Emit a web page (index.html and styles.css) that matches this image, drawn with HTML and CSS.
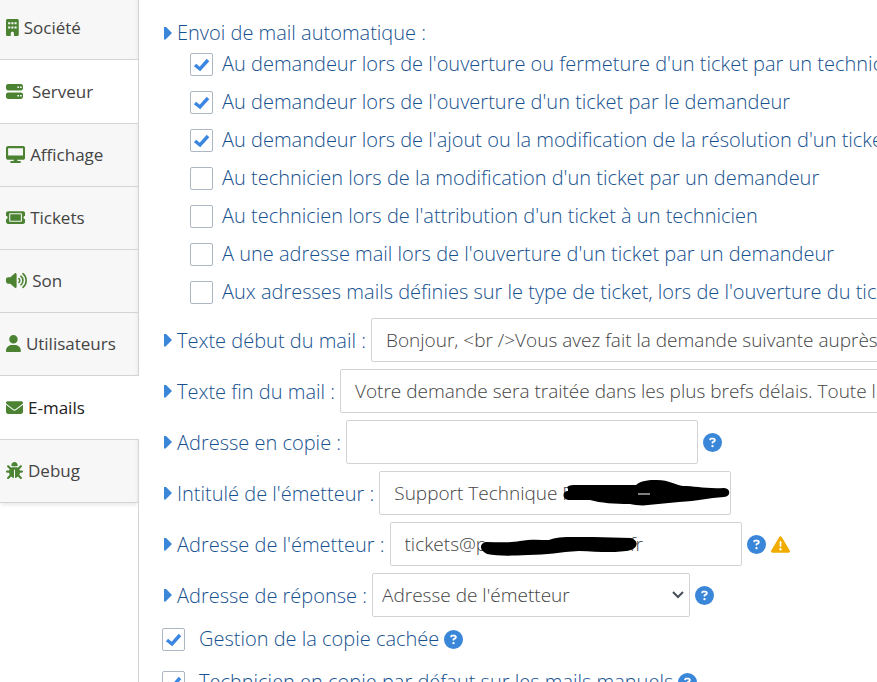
FILE: index.html
```html
<!DOCTYPE html>
<html lang="fr">

<head>
    <meta charset="utf-8">
    <meta name="viewport" content="width=device-width,initial-scale=1.0">
    <title>Paramètres - E-mails</title>
    <link rel="stylesheet" href="styles.css">
</head>

<body>
    <svg class="sprite" aria-hidden="true">
        <symbol id="help" viewBox="0 0 512 512">
            <path d="M256 512A256 256 0 1 0 256 0a256 256 0 1 0 0 512zM169.800 165.300c7.900-22.300 29.100-37.300 52.800-37.300h58.300c34.900 0 63.100 28.300 63.100 63.100c0 22.600-12.100 43.500-31.700 54.800L280 264.400c-.2 13-10.900 23.600-24 23.600c-13.300 0-24-10.700-24-24V250.500c0-8.600 4.600-16.500 12.100-20.800l44.300-25.400c4.700-2.700 7.600-7.700 7.600-13.100c0-8.400-6.800-15.100-15.100-15.100H222.600c-3.400 0-6.400 2.100-7.500 5.300l-.4 1.200c-4.400 12.500-18.200 19-30.600 14.600s-19-18.200-14.600-30.600l.4-1.200zM224 352a32 32 0 1 1 64 0 32 32 0 1 1 -64 0z"/>
        </symbol>
    </svg>

    <div id="wrap">
        <nav class="tabs">
            <a href="#societe" class="tab">
                <svg viewBox="0 0 384 512"><path fill-rule="evenodd" d="M48 0C21.500 0 0 21.500 0 48V464c0 26.500 21.500 48 48 48h96V432c0-26.500 21.500-48 48-48s48 21.500 48 48v80h96c26.500 0 48-21.500 48-48V48c0-26.500-21.500-48-48-48H48zM64 96h64v64H64zM160 96h64v64h-64zM256 96h64v64h-64zM64 224h64v64H64zM160 224h64v64h-64zM256 224h64v64h-64z"/></svg>
                <span>Société</span>
            </a>
            <a href="#serveur" class="tab tab-hover">
                <svg viewBox="0 0 512 512"><path fill-rule="evenodd" d="M64 32C28.700 32 0 60.700 0 96v64c0 35.300 28.700 64 64 64H448c35.300 0 64-28.700 64-64V96c0-35.300-28.700-64-64-64H64zM344 104h48v48h-48zM424 104h48v48h-48zM64 288c-35.300 0-64 28.700-64 64v64c0 35.300 28.700 64 64 64H448c35.300 0 64-28.700 64-64V352c0-35.300-28.700-64-64-64H64zM344 360h48v48h-48zM424 360h48v48h-48z"/></svg>
                <span>Serveur</span>
            </a>
            <a href="#affichage" class="tab">
                <svg viewBox="0 0 576 512"><path d="M64 0C28.700 0 0 28.700 0 64V352c0 35.300 28.700 64 64 64H240l-10.700 32H160c-17.700 0-32 14.300-32 32s14.300 32 32 32H416c17.700 0 32-14.300 32-32s-14.300-32-32-32H346.700L336 416H512c35.300 0 64-28.700 64-64V64c0-35.300-28.700-64-64-64H64zM512 64V288H64V64H512z"/></svg>
                <span>Affichage</span>
            </a>
            <a href="#tickets" class="tab">
                <svg viewBox="0 0 576 512"><path fill-rule="evenodd" d="M64 64C28.700 64 0 92.700 0 128v64c0 8.800 7.400 15.700 15.700 18.600C34.500 217.100 48 235 48 256s-13.500 38.900-32.300 45.400C7.400 304.300 0 311.200 0 320v64c0 35.300 28.700 64 64 64H512c35.300 0 64-28.700 64-64V320c0-8.800-7.400-15.700-15.700-18.600C541.500 294.900 528 277 528 256s13.500-38.900 32.300-45.400c8.300-2.900 15.700-9.800 15.700-18.600V128c0-35.300-28.700-64-64-64H64zM96 160c0-17.700 14.300-32 32-32H448c17.700 0 32 14.300 32 32V352c0 17.700-14.300 32-32 32H128c-17.700 0-32-14.300-32-32V160z"/><rect x="128" y="160" width="320" height="192" rx="16"/></svg>
                <span>Tickets</span>
            </a>
            <a href="#son" class="tab">
                <svg viewBox="0 0 640 512"><path d="M301 34.800C312.600 40 320 51.400 320 64V448c0 12.600-7.400 24-18.900 29.200s-25 3.100-34.400-5.300L131.800 352H64c-35.300 0-64-28.700-64-64V224c0-35.300 28.700-64 64-64h67.800L266.700 40.100c9.400-8.400 22.900-10.400 34.400-5.300z"/><g fill="none" stroke="currentColor" stroke-width="48" stroke-linecap="round"><path d="M388 200a72 72 0 0 1 0 112"/><path d="M449 126a168 168 0 0 1 0 260"/><path d="M510 51a264 264 0 0 1 0 410"/></g></svg>
                <span>Son</span>
            </a>
            <a href="#utilisateurs" class="tab">
                <svg viewBox="0 0 448 512"><path d="M224 256A128 128 0 1 0 224 0a128 128 0 1 0 0 256zm-45.700 48C79.800 304 0 383.800 0 482.300C0 498.700 13.300 512 29.700 512H418.300c16.400 0 29.700-13.300 29.700-29.700C448 383.800 368.200 304 269.700 304H178.300z"/></svg>
                <span>Utilisateurs</span>
            </a>
            <a href="#emails" class="tab tab-active">
                <svg viewBox="0 0 512 512"><path d="M48 64C21.500 64 0 85.500 0 112c0 15.100 7.100 29.300 19.200 38.400L236.800 313.600c11.400 8.500 27 8.500 38.400 0L492.800 150.400c12.100-9.100 19.200-23.300 19.200-38.400c0-26.500-21.500-48-48-48H48zM0 176V384c0 35.300 28.700 64 64 64H448c35.300 0 64-28.700 64-64V176L294.400 339.200c-22.800 17.100-54 17.100-76.800 0L0 176z"/></svg>
                <span>E-mails</span>
            </a>
            <a href="#debug" class="tab">
                <svg viewBox="0 0 512 512"><path d="M256 0c53 0 96 43 96 96v3.600c0 15.700-12.700 28.400-28.400 28.400H188.400c-15.700 0-28.400-12.700-28.400-28.400V96c0-53 43-96 96-96zM41.400 105.400c12.500-12.500 32.800-12.500 45.300 0l64 64c.7 .7 1.300 1.400 1.900 2.100c14.200-7.300 30.400-11.400 47.500-11.400H312c17.100 0 33.200 4.100 47.500 11.400c.6-.7 1.200-1.400 1.900-2.100l64-64c12.500-12.500 32.800-12.500 45.300 0s12.500 32.800 0 45.300l-64 64c-.7 .7-1.400 1.300-2.100 1.900c6.200 12 10.100 25.300 11.100 39.500H480c17.700 0 32 14.300 32 32s-14.300 32-32 32H416c0 24.600-5.500 47.800-15.400 68.600c2.200 1.300 4.200 2.900 6 4.800l64 64c12.500 12.500 12.500 32.800 0 45.300s-32.800 12.500-45.300 0l-63.100-63.100c-24.500 21.800-55.800 36.200-90.300 39.600V240c0-8.800-7.200-16-16-16s-16 7.200-16 16V479.200c-34.500-3.400-65.800-17.800-90.300-39.600L86.600 502.600c-12.500 12.500-32.800 12.500-45.300 0s-12.500-32.800 0-45.300l64-64c1.900-1.900 3.900-3.400 6-4.800C101.500 367.800 96 344.600 96 320H32c-17.700 0-32-14.300-32-32s14.300-32 32-32H96.300c1.100-14.100 5-27.500 11.100-39.500c-.7-.6-1.400-1.200-2.100-1.900l-64-64c-12.500-12.500-12.500-32.800 0-45.300z"/></svg>
                <span>Debug</span>
            </a>
        </nav>

        <form class="content">
            <div class="title caret">Envoi de mail automatique :</div>
            <div class="checks">
                <label class="check"><input type="checkbox" checked><span>Au demandeur lors de l'ouverture ou fermeture d'un ticket par un technicien</span></label>
                <label class="check"><input type="checkbox" checked><span>Au demandeur lors de l'ouverture d'un ticket par le demandeur</span></label>
                <label class="check"><input type="checkbox" checked><span>Au demandeur lors de l'ajout ou la modification de la résolution d'un ticket</span></label>
                <label class="check"><input type="checkbox"><span>Au technicien lors de la modification d'un ticket par un demandeur</span></label>
                <label class="check"><input type="checkbox"><span>Au technicien lors de l'attribution d'un ticket à un technicien</span></label>
                <label class="check"><input type="checkbox"><span>A une adresse mail lors de l'ouverture d'un ticket par un demandeur</span></label>
                <label class="check"><input type="checkbox"><span>Aux adresses mails définies sur le type de ticket, lors de l'ouverture du ticket</span></label>
            </div>

            <div class="fields">
                <div class="row">
                    <label class="caret" for="mail_txt">Texte début du mail :</label>
                    <input type="text" class="field field-long" id="mail_txt" value="Bonjour, &lt;br /&gt;Vous avez fait la demande suivante auprès du support :">
                </div>
                <div class="row">
                    <label class="caret" for="mail_txt_end">Texte fin du mail :</label>
                    <input type="text" class="field field-long" id="mail_txt_end" value="Votre demande sera traitée dans les plus brefs délais. Toute l'équipe">
                </div>
                <div class="row">
                    <label class="caret" for="mail_cc">Adresse en copie :</label>
                    <input type="text" class="field" id="mail_cc">
                    <svg class="help"><use href="#help"/></svg>
                </div>
                <div class="row">
                    <label class="caret" for="mail_from_name">Intitulé de l'émetteur :</label>
                    <div class="masked">
                        <input type="text" class="field" id="mail_from_name" value="Support Technique P">
                        <svg class="mask" viewBox="0 0 352 44"><path d="M189 18C187 15 190 14 197 14H257C263 9 271 9 278 9C290 9 297 14 304 15C316 15 326 18 345 17C352 17 352 26 345 26C329 27 319 30 300 31L269 34C264 35 255 34 251 33C235 33 222 32 211 29H189C183 28 183 20 189 20z"/><path class="gap" d="M259 23L271 23"/></svg>
                    </div>
                </div>
                <div class="row">
                    <label class="caret" for="mail_from_adr">Adresse de l'émetteur :</label>
                    <div class="masked">
                        <input type="text" class="field" id="mail_from_adr" spellcheck="false" value="tickets@p                            .fr">
                        <svg class="mask" viewBox="0 0 352 44"><path d="M96 20C108 20 121 21 130 19C141 17 150 18 159 18C167 14 183 15 203 15L241 16C248 18 249 25 241 28C229 31 211 30 189 29C169 30 158 33 138 33C118 34 108 34 97 32C88 28 90 21 96 20z"/></svg>
                    </div>
                    <svg class="help"><use href="#help"/></svg>
                    <svg class="warning" viewBox="0 0 512 512"><path d="M256 32c14.200 0 27.300 7.500 34.500 19.800l216 368c7.300 12.400 7.300 27.700 .2 40.100S486.300 480 472 480H40c-14.300 0-27.600-7.700-34.700-20.100s-7-27.800 .2-40.100l216-368C228.700 39.500 241.800 32 256 32zm0 128c-13.300 0-24 10.700-24 24V296c0 13.300 10.700 24 24 24s24-10.700 24-24V184c0-13.300-10.700-24-24-24zm32 224a32 32 0 1 0 -64 0 32 32 0 1 0 64 0z"/></svg>
                </div>
                <div class="row">
                    <label class="caret" for="mail_reply">Adresse de réponse :</label>
                    <select class="field" id="mail_reply">
                        <option>Adresse de l'émetteur</option>
                    </select>
                    <svg class="help"><use href="#help"/></svg>
                </div>
            </div>

            <div class="options">
                <label class="check"><input type="checkbox" checked><span>Gestion de la copie cachée</span><svg class="help"><use href="#help"/></svg></label>
                <label class="check"><input type="checkbox" checked><span>Technicien en copie par défaut sur les mails manuels</span><svg class="help"><use href="#help"/></svg></label>
            </div>
        </form>
    </div>
</body>

</html>
```
FILE: styles.css
```css
* {
    box-sizing: border-box;
}

html,
body {
    margin: 0;
    padding: 0;
    height: 100%;
}

body {
    font-family: "Open Sans", "Liberation Sans", sans-serif;
    font-size: 20px;
    font-weight: 325;
    color: #16528f;
    background-color: #fff;
    overflow: hidden;
}

.sprite {
    display: none;
}

#wrap {
    display: flex;
    min-height: 100%;
}

/* left tabs */
.tabs {
    flex: none;
    width: 139px;
    margin-top: -3px;
    border-right: 1px solid #d3d4d5;
    font-weight: 400;
}

.tab {
    display: flex;
    align-items: center;
    gap: 5px;
    height: 63px;
    padding: 0 0 1px 6px;
    border-bottom: 1px solid #d3d4d5;
    background-color: #f7f7f7;
    box-shadow: inset -3px 0 3px -2px #eaeaea;
    color: #444;
    font-size: 17px;
    text-decoration: none;
}

.tab svg {
    flex: none;
    height: 17px;
    color: #4b8333;
    fill: #4b8333;
}

.tab-hover,
.tab-active {
    height: 64px;
    background-color: #fff;
    box-shadow: none;
}

.tab-hover {
    gap: 9px;
}

.tab-active {
    margin-right: -1px;
    color: #222;
}

.tab:last-child {
    box-shadow: inset -3px 0 3px -2px #eaeaea, 0 3px 4px -1px #e8e8e8;
}

/* form */
.content {
    flex: 1;
    min-width: 0;
    padding: 21px 0 0 23px;
    white-space: nowrap;
}

.title {
    line-height: 24px;
}

.caret {
    display: flex;
    align-items: center;
    gap: 5px;
    padding-left: 2px;
}

.caret::before {
    content: "";
    width: 8px;
    height: 13px;
    background-color: #3a87d9;
    clip-path: polygon(0 0, 20% 0, 100% 50%, 20% 100%, 0 100%);
}

.checks {
    padding-left: 28px;
}

.check {
    display: flex;
    align-items: center;
    height: 38px;
}

.check span {
    padding-bottom: 2px;
}

.check input {
    appearance: none;
    flex: none;
    width: 23px;
    height: 23px;
    margin: 0 9px 0 0;
    border: 1px solid #acb7c3;
    border-radius: 2px;
    background-color: #fff;
}

.check input:checked {
    background-image: url("data:image/svg+xml,%3Csvg xmlns='http://www.w3.org/2000/svg' viewBox='0 0 21 21'%3E%3Cpath d='M4 11l5 4L17 6' fill='none' stroke='%233b86e0' stroke-width='3.400'/%3E%3C/svg%3E");
}

.fields {
    display: flex;
    flex-direction: column;
    gap: 7px;
    padding-top: 7px;
}

.row {
    display: flex;
    align-items: center;
    gap: 5px;
}

.field {
    flex: none;
    width: 352px;
    height: 44px;
    padding: 0 14px;
    border: 1px solid #d3d3d3;
    border-radius: 2px;
    background-color: #fff;
    color: #444;
    font-family: inherit;
    font-size: 19px;
    font-weight: inherit;
}

.field-long {
    width: 900px;
}

select.field {
    appearance: none;
    width: 318px;
    padding: 0 9px;
    background: #fff url("data:image/svg+xml,%3Csvg xmlns='http://www.w3.org/2000/svg' width='12' height='8'%3E%3Cpath d='M1 1l5 5 5-5' fill='none' stroke='%23495057' stroke-width='2'/%3E%3C/svg%3E") no-repeat right 5px center;
}

.masked {
    position: relative;
    display: flex;
}

.mask {
    position: absolute;
    top: 0;
    left: 0;
    width: 100%;
    height: 100%;
    pointer-events: none;
}

.mask .gap {
    stroke: #fff;
}

.help,
.warning {
    flex: none;
    width: 19px;
    height: 19px;
    fill: #3a87d9;
}

.warning {
    fill: #f0ad00;
}

.options {
    padding-top: 1px;
}

.options .check {
    height: 43px;
}

.options .check input {
    margin-right: 14px;
}

.options .help {
    margin-left: 5px;
}
```
